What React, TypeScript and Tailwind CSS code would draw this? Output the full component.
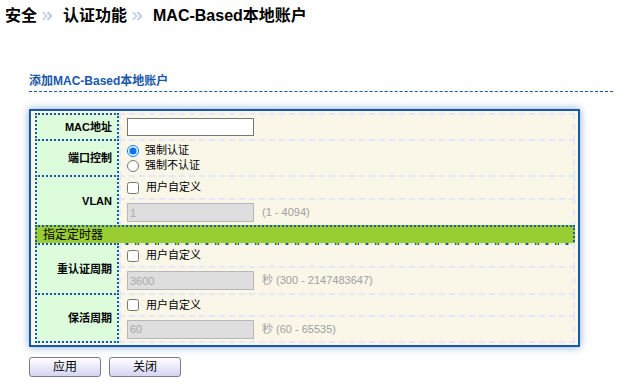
import React from "react";

const FONT = { fontFamily: '"Liberation Sans", "Noto Sans CJK SC", sans-serif' };

function Sep() {
  return (
    <svg width="11" height="12" viewBox="0 0 11 12" className="ml-[5px] mr-[10px] shrink-0">
      <path d="M1 2 L4.5 6 L1 10" fill="none" stroke="#c4cfe0" strokeWidth="1.8" />
      <path d="M5.5 2 L9 6 L5.5 10" fill="none" stroke="#b4c4dc" strokeWidth="1.8" />
    </svg>
  );
}

function Label({ text, h }: { text: string; h: number }) {
  return (
    <div
      className="w-[84px] shrink-0 flex items-center justify-end pr-[5px] border-2 border-dotted border-[#1858a8] bg-[#dcfcdc] text-[11px] font-bold text-black"
      style={{ height: h }}
    >
      {text}
    </div>
  );
}

function Cell({ h, first, children }: { h: number; first?: boolean; children: React.ReactNode }) {
  return (
    <div
      className={`flex items-center pl-[6px] border-2 border-dashed border-[#e6e6fa] text-[11px] ${first ? "" : "-mt-[2px]"}`}
      style={{ height: h }}
    >
      {children}
    </div>
  );
}

function Check() {
  return (
    <label className="flex items-center gap-[7px] text-black">
      <input type="checkbox" className="m-0 w-[12px] h-[12px]" />
      用户自定义
    </label>
  );
}

function Disabled({ value, hint }: { value: string; hint: string }) {
  return (
    <div className="flex items-center gap-[8px]">
      <input
        disabled
        value={value}
        readOnly
        className="w-[127px] h-[19px] bg-[#dedede] border border-[#b8b8b8] text-[#a8a8a8] text-[11px] px-[2px] outline-none"
      />
      <span className="text-[#a0a0a0]">{hint}</span>
    </div>
  );
}

export default function App() {
  return (
    <div className="w-[629px] h-[391px] bg-white" style={FONT}>
      {/* Breadcrumb */}
      <div className="flex items-center pt-[4px] pl-[5px] h-[28px] text-[16px] font-bold text-black leading-6">
        <span>安全</span>
        <Sep />
        <span>认证功能</span>
        <Sep />
        <span>MAC-Based本地账户</span>
      </div>

      {/* Section title */}
      <div className="ml-[29px] mt-[45px] w-[584px] border-b border-dashed border-[#1858a8] pb-[2px] text-[12px] font-bold text-[#1858a8] leading-4">
        添加MAC-Based本地账户
      </div>

      {/* Panel */}
      <div className="ml-[29px] mt-[17px] w-[551px] border-2 border-[#1858a8] bg-[#faf6e8] pt-[2px] pl-[4px] pr-[3px] pb-[2px] shadow-[0_0_8px_rgba(40,100,190,0.55)]">
        <div className="w-[540px] flex flex-col">
          <div className="flex">
            <Label text="MAC地址" h={28} />
            <div className="flex-1 flex flex-col">
              <Cell h={28} first>
                <input className="w-[127px] h-[18px] bg-white border border-[#767676] outline-none" />
              </Cell>
            </div>
          </div>

          <div className="flex -mt-[2px]">
            <Label text="端口控制" h={38} />
            <div className="flex-1 flex flex-col">
              <Cell h={38} first>
                <div className="flex flex-col leading-[15px] text-black">
                  <label className="flex items-center gap-[6px]">
                    <input type="radio" name="pc" defaultChecked className="m-0 w-[12px] h-[12px]" />
                    强制认证
                  </label>
                  <label className="flex items-center gap-[6px]">
                    <input type="radio" name="pc" className="m-0 w-[12px] h-[12px]" />
                    强制不认证
                  </label>
                </div>
              </Cell>
            </div>
          </div>

          <div className="flex -mt-[2px]">
            <Label text="VLAN" h={52} />
            <div className="flex-1 flex flex-col">
              <Cell h={25} first>
                <Check />
              </Cell>
              <Cell h={29}>
                <Disabled value="1" hint="(1 - 4094)" />
              </Cell>
            </div>
          </div>

          <div className="-mt-[2px] h-[20px] flex items-center pl-[6px] border-2 border-dotted border-[#1858a8] bg-[#9acd32] text-[12px] text-black">
            指定定时器
          </div>

          <div className="flex -mt-[2px]">
            <Label text="重认证周期" h={52} />
            <div className="flex-1 flex flex-col">
              <Cell h={25} first>
                <Check />
              </Cell>
              <Cell h={29}>
                <Disabled value="3600" hint="秒 (300 - 2147483647)" />
              </Cell>
            </div>
          </div>

          <div className="flex -mt-[2px]">
            <Label text="保活周期" h={50} />
            <div className="flex-1 flex flex-col">
              <Cell h={24} first>
                <Check />
              </Cell>
              <Cell h={28}>
                <Disabled value="60" hint="秒 (60 - 65535)" />
              </Cell>
            </div>
          </div>
        </div>
      </div>

      {/* Buttons */}
      <div className="ml-[29px] mt-[10px] flex gap-[8px]">
        {["应用", "关闭"].map((t) => (
          <button
            key={t}
            className="w-[72px] h-[20px] rounded-[3px] border border-[#7a7a8a] bg-gradient-to-b from-white to-[#d4d4f4] text-[12px] text-black leading-none"
          >
            {t}
          </button>
        ))}
      </div>
    </div>
  );
}
